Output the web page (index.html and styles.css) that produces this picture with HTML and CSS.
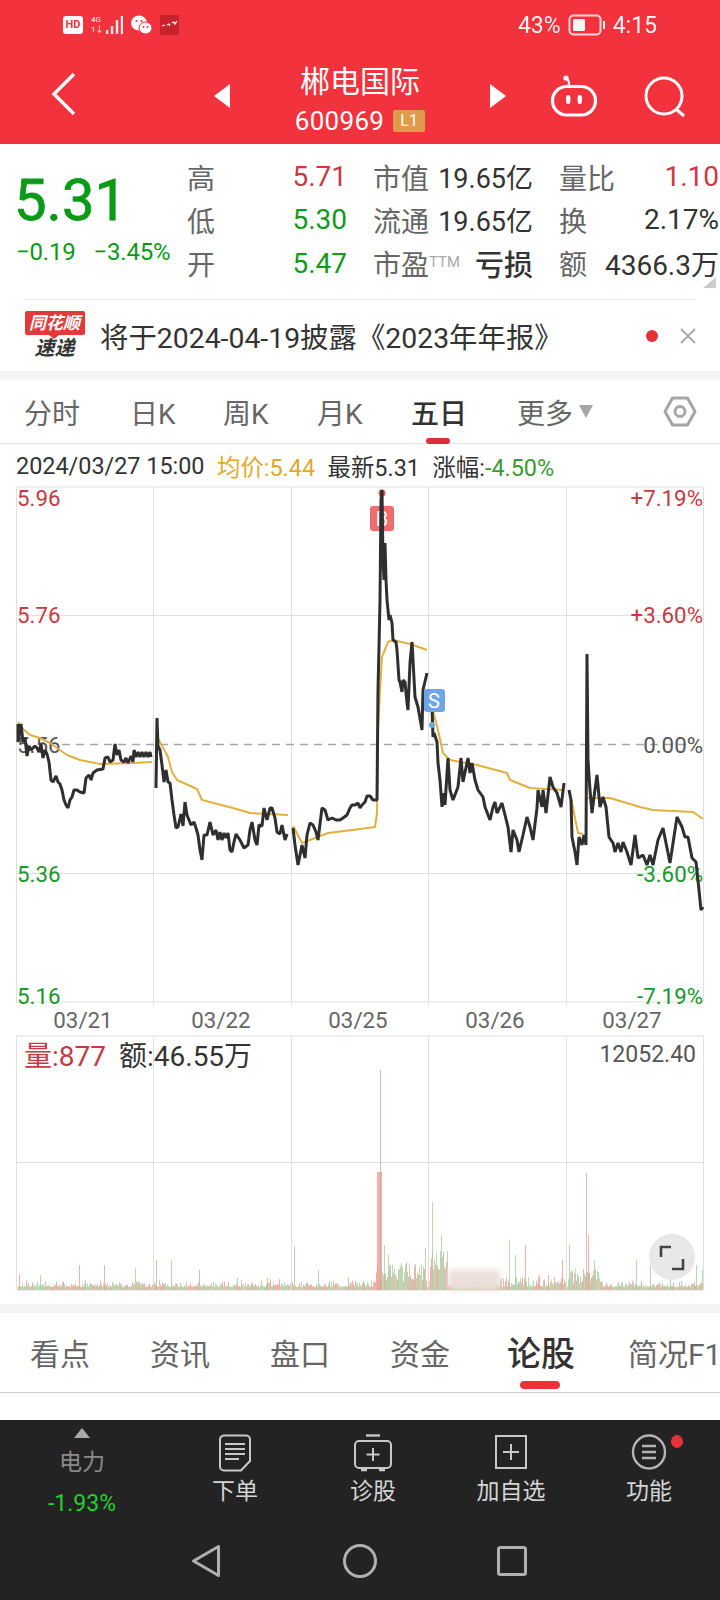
FILE: index.html
```html
<!DOCTYPE html>
<html lang="zh-CN">
<head>
    <meta charset="UTF-8">
    <meta name="viewport" content="width=device-width, initial-scale=1.0">
    <title>郴电国际</title>
    <link rel="stylesheet" href="styles.css">
</head>
<body>
    <div class="phone">
        <header class="top">
            <div class="status">
                <div class="status-left">
                    <span class="hd">HD</span>
                    <span class="net"><i>4G</i><i>1↓</i></span>
                    <svg class="signal" width="17" height="20" viewBox="0 0 17 20"><path d="M1 19v-4M6 19v-8M11 19V5M16 19V1" stroke="#fff" stroke-width="2.4" opacity=".9"/></svg>
                    <svg class="wechat" width="21" height="20" viewBox="0 0 21 20"><ellipse cx="8" cy="8" rx="8" ry="7.5" fill="#fff"/><ellipse cx="14.5" cy="13" rx="6.5" ry="6" fill="#fff" stroke="#f2323c"/><circle cx="5.5" cy="6" r="1.1" fill="#f2323c"/><circle cx="10.5" cy="6" r="1.1" fill="#f2323c"/><circle cx="12.5" cy="12" r=".9" fill="#f2323c"/><circle cx="16.5" cy="12" r=".9" fill="#f2323c"/></svg>
                    <svg class="app" width="19" height="20" viewBox="0 0 19 20"><rect width="19" height="20" fill="#c8222c"/><path d="M2 11l3-1M7 10l2-1 1 2M12 8l2-1 1 2 2-3" stroke="#fff" stroke-width="1.2" fill="none"/></svg>
                </div>
                <div class="status-right">
                    <span>43%</span>
                    <svg width="38" height="24" viewBox="0 0 38 24"><rect x="1.5" y="2.5" width="31" height="19" rx="4" fill="none" stroke="#fff" stroke-width="2" opacity=".85"/><rect x="5" y="6" width="12" height="12" rx="1.5" fill="#fff"/><rect x="35" y="8" width="2" height="8" fill="#fff"/></svg>
                    <span>4:15</span>
                </div>
            </div>
            <div class="titlebar">
                <svg class="back" width="26" height="44" viewBox="0 0 26 44"><path d="M23 2L3 22l20 20" fill="none" stroke="#fff" stroke-width="3.4"/></svg>
                <svg class="arrow-l" width="16" height="24" viewBox="0 0 16 24"><path d="M16 0v24L0 12z" fill="#fff"/></svg>
                <div class="stock">
                    <div class="stock-name">郴电国际</div>
                    <div class="stock-code">600969<span class="level">L1</span></div>
                </div>
                <svg class="arrow-r" width="16" height="24" viewBox="0 0 16 24"><path d="M0 0v24l16-12z" fill="#fff"/></svg>
                <svg class="robot" width="48" height="42" viewBox="0 0 48 42">
                    <path d="M18 11c2-2 1-6-2-8" fill="none" stroke="#fff" stroke-width="2.2"/>
                    <circle cx="16" cy="3" r="2.6" fill="#fff"/>
                    <rect x="2.5" y="11.5" width="43" height="28.5" rx="14.2" fill="none" stroke="#fff" stroke-width="3.2"/>
                    <rect x="16" y="20" width="4.4" height="9" rx="2.2" fill="#fff"/>
                    <rect x="27.6" y="20" width="4.4" height="9" rx="2.2" fill="#fff"/>
                </svg>
                <svg class="search" width="42" height="42" viewBox="0 0 42 42"><circle cx="20" cy="20" r="18" fill="none" stroke="#fff" stroke-width="3"/><path d="M32 33l8 7" stroke="#fff" stroke-width="3"/></svg>
            </div>
        </header>

        <section class="quote">
            <div class="quote-main">
                <div class="price">
                    <div class="price-now">5.31</div>
                    <div class="price-change"><span>−0.19</span><span>−3.45%</span></div>
                </div>
                <div class="stats">
                    <div class="stat"><span class="stat-label">高</span><span class="up">5.71</span></div>
                    <div class="stat"><span class="stat-label">市值</span><span class="stat-value cap">19.65亿</span></div>
                    <div class="stat"><span class="stat-label">量比</span><span class="up">1.10</span></div>
                    <div class="stat"><span class="stat-label">低</span><span class="down">5.30</span></div>
                    <div class="stat"><span class="stat-label">流通</span><span class="stat-value cap">19.65亿</span></div>
                    <div class="stat"><span class="stat-label">换</span><span class="stat-value">2.17%</span></div>
                    <div class="stat"><span class="stat-label">开</span><span class="down">5.47</span></div>
                    <div class="stat"><span class="stat-label">市盈<sup class="ttm">TTM</sup></span><span class="stat-value loss">亏损</span></div>
                    <div class="stat"><span class="stat-label">额</span><span class="stat-value">4366.3万</span></div>
                </div>
                <span class="corner"></span>
            </div>
            <div class="news">
                <div class="news-logo">
                    <span class="news-flag">同花顺</span>
                    <span class="news-sub">速递</span>
                </div>
                <div class="news-text">将于2024-04-19披露《2023年年报》</div>
                <span class="news-dot"></span>
                <svg class="news-close" width="16" height="16" viewBox="0 0 16 16"><path d="M1 1l14 14M15 1L1 15" stroke="#a8a8a8" stroke-width="1.8"/></svg>
            </div>
        </section>

        <div class="band"></div>

        <nav class="chart-tabs">
            <span class="chart-tab w-106">分时</span>
            <span class="chart-tab w-93">日K</span>
            <span class="chart-tab w-94">周K</span>
            <span class="chart-tab w-94">月K</span>
            <span class="chart-tab w-106 active">五日</span>
            <span class="chart-tab more">更多<i class="more-arrow"></i></span>
            <svg class="hex" width="34" height="31" viewBox="0 0 34 31"><path d="M9.5 2h15L32 15.5 24.5 29h-15L2 15.5z" fill="none" stroke="#a6a6a6" stroke-width="3" stroke-linejoin="round"/><circle cx="17" cy="15.5" r="5" fill="none" stroke="#a6a6a6" stroke-width="3"/></svg>
        </nav>

        <div class="info-line">
            <span>2024/03/27 15:00</span>
            <span class="avg">均价:5.44</span>
            <span>最新5.31</span>
            <span>涨幅:<em>-4.50%</em></span>
        </div>

        <svg class="price-chart" width="720" height="548" viewBox="0 486 720 548">
            <path class="grid" d="M16.5 487H703.5V1002H16.5ZM153.5 487V1006M291.5 487V1006M428.5 487V1006M566.5 487V1006M16 615.5H704M16 873.5H704"/>
            <path class="dash" d="M62 744.5H690"/>
            <text class="axis up-t" x="17" y="506">5.96</text>
            <text class="axis up-t" x="17" y="623">5.76</text>
            <text class="axis flat-t" x="17" y="753">5.56</text>
            <text class="axis down-t" x="17" y="882">5.36</text>
            <text class="axis down-t" x="17" y="1004">5.16</text>
            <text class="axis up-t end" x="703" y="506">+7.19%</text>
            <text class="axis up-t end" x="703" y="623">+3.60%</text>
            <text class="axis flat-t end" x="703" y="753">0.00%</text>
            <text class="axis down-t end" x="703" y="882">-3.60%</text>
            <text class="axis down-t end" x="703" y="1004">-7.19%</text>
            <text class="axis date" x="83" y="1028">03/21</text>
            <text class="axis date" x="221" y="1028">03/22</text>
            <text class="axis date" x="358" y="1028">03/25</text>
            <text class="axis date" x="495" y="1028">03/26</text>
            <text class="axis date" x="632" y="1028">03/27</text>

            <rect class="mark-b" x="370" y="506" width="24" height="25" rx="3"/>
            <text class="mark-text" x="382" y="526">B</text>
            <circle cx="382" cy="493" r="3.5" fill="#e0555c"/>

            <g class="avg-line">
                <polyline points="18,722 22,728 30,735 40,738 50,743 67,755 80,760 100,764 133,763 152,762"/>
                <polyline points="156,735 160,742 168,757 172,772 177,780 197,789 202,800 233,808 250,813 288,815"/>
                <polyline points="293,826 302,843 310,840 328,833 360,829 375,827 377,813 378,730 380,690 382,657 388,642 393,640 410,644 427,650"/>
                <polyline points="432,707 438,730 443,753 450,760 477,765 507,773 510,780 530,788 563,790"/>
                <polyline points="569,790 572,803 578,833 583,834"/>
                <polyline points="588,798 610,798 640,807 653,810 693,812 703,819"/>
            </g>
            <g class="price-line">
                <polyline points="18,724 18,742 21,724 23,742 25,738 27,756 29,746 31,750 35,746 37,748 39,752 41,744 43,758 45,750 47,754 49,762 51,780 53,782 56,776 58,782 60,784 62,790 64,800 66,805 68,808 70,800 72,797 74,790 77,790 80,792 84,793 86,778 89,775 91,780 93,773 97,770 103,769 105,758 108,757 110,762 113,760 115,744 117,755 119,750 121,760 124,762 126,758 128,763 131,756 133,762 134,750 136,757 138,752 140,757 142,752 144,757 146,752 148,757 150,752 151,757"/>
                <polyline points="156,788 157,718 158,746 160,750 162,765 164,782 166,770 168,782 170,783 172,800 174,815 176,828 178,827 181,814 183,826 185,802 187,815 189,820 191,825 194,822 196,828 198,835 200,850 202,860 204,835 207,835 210,822 213,835 216,830 218,840 220,832 222,840 224,833 226,838 228,833 230,850 232,852 234,842 236,834 240,840 244,848 248,845 250,830 252,822 255,840 257,845 259,825 262,826 264,808 267,820 270,808 272,808 275,818 277,832 280,834 282,825 285,840 287,834"/>
                <polyline points="293,828 295,845 298,865 300,855 302,845 305,858 307,835 310,823 313,825 316,832 318,840 322,808 325,810 328,820 332,818 336,820 340,820 343,818 347,815 350,808 352,805 355,805 358,803 360,808 362,805 365,802 367,796 370,796 373,800 376,800 377,800 378,690 379,647 380,600 381,500 382,490 383,560 384,580 385,543 386,580 387,600 388,610 389,620 390,615 392,623 393,640 396,642 397,650 399,680 400,682 402,692 403,680 405,682 407,703 408,710 410,663 412,642 413,660 415,697 418,707 422,730 423,690 427,673"/>
                <polyline points="432,707 433,737 434,733 437,742 438,763 440,780 442,807 443,793 445,805 448,758 450,790 453,800 458,787 461,758 463,782 468,758 470,773 472,763 475,780 478,790 483,797 485,807 490,820 493,807 495,802 497,813 502,803 505,815 508,827 511,852 513,830 517,840 519,852 523,835 527,817 530,827 533,840 537,808 538,790 542,807 543,790 546,813 550,777 553,787 557,793 561,807 564,783"/>
                <polyline points="569,790 571,800 572,837 575,852 577,865 579,837 582,845 584,835 586,845 587,654 588,760 590,790 592,813 594,797 597,775 600,807 603,797 606,807 609,837 613,843 615,852 618,843 621,852 623,842 627,852 631,865 635,835 638,858 643,855 647,865 650,855 653,865 658,840 663,828 666,843 670,863 677,817 682,827 685,837 688,837 692,858 696,862 699,890 701,910 703,907"/>
            </g>
            <rect class="mark-s" x="424" y="689" width="21" height="23" rx="3"/>
            <text class="mark-text" x="434" y="708">S</text>
            <circle cx="432" cy="725" r="3" fill="#6ea5e6"/>
        </svg>

        <svg class="volume-chart" id="volume-chart" width="720" height="262" viewBox="0 1034 720 262">
            <path class="grid" d="M16.5 1036H703.5V1290H16.5ZM153.5 1036V1290M291.5 1036V1290M428.5 1036V1290M566.5 1036V1290M16 1162.5H704"/>
            <g id="volume-bars"></g>
            <text class="vol-text up-t" x="24" y="1066">量:877</text>
            <text class="vol-text" x="119" y="1066">额:46.55万</text>
            <text class="axis flat-t end small-num" x="696" y="1062">12052.40</text>
            <circle cx="672" cy="1257" r="23" fill="#e8e8e8"/>
            <path d="M661 1257v-10h10M683 1259v10h-11" fill="none" stroke="#444" stroke-width="2.6"/>
        </svg>

        <div class="gap-8"></div>
        <div class="band"></div>

        <nav class="info-tabs">
            <span class="info-tab w-120">看点</span>
            <span class="info-tab w-120">资讯</span>
            <span class="info-tab w-120">盘口</span>
            <span class="info-tab w-117">资金</span>
            <span class="info-tab w-121 active">论股</span>
            <span class="info-tab">简况F1</span>
        </nav>
        <div class="white-gap"></div>

        <footer class="bottom">
            <div class="tools">
                <div class="tool sector">
                    <i class="sector-arrow"></i>
                    <span class="sector-name">电力</span>
                    <span class="sector-rate">-1.93%</span>
                </div>
                <div class="tool">
                    <svg width="34" height="38" viewBox="0 0 34 38"><path d="M6 1.5h22a4 4 0 0 1 4 4V27l-9 9.5H6a4 4 0 0 1-4-4v-27a4 4 0 0 1 4-4z" fill="none" stroke="#c8c8c8" stroke-width="2"/><path d="M7 10h20M7 15h20M7 20h20M7 25h14" stroke="#c8c8c8" stroke-width="2"/></svg>
                    <span class="tool-name">下单</span>
                </div>
                <div class="tool">
                    <svg width="40" height="38" viewBox="0 0 40 38"><path d="M13 1.5h14" stroke="#c8c8c8" stroke-width="2.4"/><rect x="2" y="7" width="36" height="27" rx="4" fill="none" stroke="#c8c8c8" stroke-width="2"/><path d="M20 14v13M13.5 20.5h13" stroke="#c8c8c8" stroke-width="2"/><path d="M8 36h6M26 36h6" stroke="#c8c8c8" stroke-width="2.4"/></svg>
                    <span class="tool-name">诊股</span>
                </div>
                <div class="tool">
                    <svg width="34" height="38" viewBox="0 0 34 38"><rect x="2" y="2" width="30" height="32" fill="none" stroke="#c8c8c8" stroke-width="2"/><path d="M17 10v16M9 18h16" stroke="#c8c8c8" stroke-width="2"/></svg>
                    <span class="tool-name">加自选</span>
                </div>
                <div class="tool func">
                    <svg width="36" height="38" viewBox="0 0 36 38"><ellipse cx="18" cy="18" rx="16" ry="16.5" fill="none" stroke="#b4b4b4" stroke-width="2.4"/><path d="M11 12h14M11 18h14M11 24h14" stroke="#b4b4b4" stroke-width="2.6"/></svg>
                    <span class="func-dot"></span>
                    <span class="tool-name">功能</span>
                </div>
            </div>
            <div class="navbar">
                <svg class="nav-back" width="30" height="34" viewBox="0 0 30 34"><path d="M27.5 2.5v29L2.5 17z" fill="none" stroke="#b0b0b0" stroke-width="3" stroke-linejoin="round"/></svg>
                <svg class="nav-home" width="34" height="34" viewBox="0 0 34 34"><circle cx="17" cy="17" r="15.5" fill="none" stroke="#b0b0b0" stroke-width="3"/></svg>
                <svg class="nav-recent" width="30" height="30" viewBox="0 0 30 30"><rect x="1.5" y="1.5" width="27" height="27" rx="2" fill="none" stroke="#b0b0b0" stroke-width="3"/></svg>
            </div>
        </footer>
    </div>
    <script src="volume.js"></script>
</body>
</html>
```

FILE: styles.css
```css
body {
    margin: 0;
    padding: 0;
    background-color: #fff;
    font-family: Roboto, "Noto Sans CJK SC", sans-serif;
}

.phone {
    width: 720px;
    height: 1600px;
    overflow: hidden;
    background-color: #fff;
}

svg {
    display: block;
}

/* top red area */
.top {
    height: 144px;
    background-color: #f2323c;
    color: #fff;
}

.status {
    height: 50px;
    display: flex;
    justify-content: space-between;
    align-items: center;
    padding: 0 63px;
}

.status-left {
    display: flex;
    align-items: center;
    gap: 8px;
}

.hd {
    width: 20px;
    height: 18px;
    border-radius: 3px;
    background-color: #fff;
    color: #f2323c;
    font-size: 11px;
    font-weight: 700;
    line-height: 18px;
    text-align: center;
}

.net {
    display: flex;
    flex-direction: column;
    margin-right: -6px;
    font-size: 8px;
    line-height: 10px;
}

.net i {
    font-style: normal;
}

.status-right {
    display: flex;
    align-items: center;
    gap: 7px;
    font-size: 23px;
    opacity: .95;
}

.titlebar {
    height: 94px;
    display: flex;
    align-items: flex-start;
    padding-left: 51px;
}

.back {
    margin-top: 22px;
}

.arrow-l {
    margin: 34px 0 0 137px;
}

.stock {
    width: 260px;
    text-align: center;
}

.stock-name {
    margin-top: 12px;
    font-size: 30px;
    line-height: 40px;
}

.stock-code {
    display: flex;
    justify-content: center;
    align-items: center;
    gap: 9px;
    margin-top: 4px;
    font-size: 26px;
    line-height: 30px;
    letter-spacing: 0.3px;
}

.level {
    width: 32px;
    height: 22px;
    border-radius: 2px;
    background-color: #e09a4b;
    font-size: 16px;
    line-height: 22px;
}

.arrow-r {
    margin-top: 34px;
}

.robot {
    margin: 25px 0 0 44px;
}

.search {
    margin: 26px 0 0 46px;
}

/* quote block */
.quote {
    height: 227px;
    padding: 0 0 0 16px;
    box-sizing: border-box;
}

.quote-main {
    position: relative;
    height: 155px;
    display: flex;
}

.price {
    width: 171px;
    flex-shrink: 0;
    color: #0a9a18;
}

.price-now {
    margin: 23px 0 0 -2px;
    font-size: 58px;
    line-height: 66px;
    -webkit-text-stroke: 0.8px #0a9a18;
}

.price-change {
    display: flex;
    gap: 18px;
    margin-top: 4px;
    font-size: 24px;
    line-height: 30px;
    white-space: nowrap;
    letter-spacing: -0.2px;
}

.stats {
    display: grid;
    grid-template-columns: 160px 160px 160px;
    grid-auto-rows: 43.3px;
    column-gap: 26px;
    padding-top: 11px;
    flex-shrink: 0;
}

.stat {
    display: flex;
    justify-content: space-between;
    align-items: center;
    font-size: 28px;
    white-space: nowrap;
}

.stat-label {
    color: #666;
    font-size: 28px;
}

.stat-value {
    color: #333;
}

.cap {
    font-size: 27px;
}

.loss {
    font-size: 29px;
    font-weight: 500;
}

.ttm {
    font-size: 15px;
    color: #aaa;
    vertical-align: 8px;
    line-height: 0;
}

.up {
    color: #cb3a42;
}

.down {
    color: #109a1f;
}

.corner {
    position: absolute;
    right: 4px;
    bottom: 11px;
    width: 0;
    height: 0;
    border-left: 13px solid transparent;
    border-bottom: 11px solid #ccc;
}

.news {
    display: flex;
    align-items: center;
    height: 72px;
    margin: 0 24px 0 8px;
    border-top: 1px solid #e6e6e6;
    box-sizing: border-box;
}

.news-logo {
    width: 61px;
    display: flex;
    flex-direction: column;
    align-items: center;
    font-style: italic;
    font-weight: 700;
    white-space: nowrap;
}

.news-flag {
    position: relative;
    width: 60px;
    height: 24px;
    border-radius: 2px;
    background-color: #e23a3a;
    color: #fff;
    font-size: 17px;
    line-height: 24px;
    text-align: center;
}

.news-flag::after {
    content: "";
    position: absolute;
    left: 24px;
    bottom: -4px;
    width: 0;
    height: 0;
    border-left: 5px solid transparent;
    border-right: 5px solid transparent;
    border-top: 4px solid #e23a3a;
}

.news-sub {
    margin-top: 1px;
    color: #333;
    font-size: 20px;
    line-height: 24px;
}

.news-text {
    flex: 1;
    margin-left: 15px;
    color: #333;
    font-size: 28.4px;
    white-space: nowrap;
}

.news-dot {
    width: 12px;
    height: 12px;
    border-radius: 50%;
    background-color: #e5323a;
    margin-right: 22px;
}

.band {
    height: 9px;
    background-color: #f4f4f4;
}

/* chart tabs */
.chart-tabs {
    height: 63px;
    display: flex;
    align-items: center;
    padding-left: 24px;
    border-bottom: 1px solid #e2e2e2;
    position: relative;
}

.chart-tab {
    color: #666;
    font-size: 28px;
    flex-shrink: 0;
}

.w-93 { width: 93px; }
.w-94 { width: 94px; }
.w-106 { width: 106px; }

.chart-tab.active {
    position: relative;
    color: #333;
    font-weight: 500;
}

.chart-tab.active::after {
    content: "";
    position: absolute;
    left: 15px;
    bottom: -12px;
    width: 24px;
    height: 6px;
    border-radius: 3px;
    background-color: #dc2f38;
}

.more {
    display: flex;
    align-items: center;
    width: 146px;
}

.more-arrow {
    width: 0;
    height: 0;
    margin: 0 0 0 6px;
    border-left: 7.5px solid transparent;
    border-right: 7.5px solid transparent;
    border-top: 13px solid #a6a6a6;
}

.info-line {
    height: 42px;
    display: flex;
    align-items: center;
    gap: 12.5px;
    padding: 2px 0 0 16px;
    box-sizing: border-box;
    color: #333;
    font-size: 23.4px;
    white-space: nowrap;
}

.avg {
    color: #e0a92e;
}

.info-line em {
    font-style: normal;
    color: #3d9a32;
}

/* charts */
.grid {
    fill: none;
    stroke: #e0e0e0;
    stroke-width: 1;
}

.dash {
    fill: none;
    stroke: #a6a6a6;
    stroke-width: 1.5;
    stroke-dasharray: 8 6;
}

.axis {
    font-size: 22.3px;
}

.small-num {
    font-size: 23px;
}

.end {
    text-anchor: end;
}

.vol-text {
    fill: #333;
    font-size: 28px;
}

.up-t {
    fill: #c53a44;
}

.down-t {
    fill: #16982a;
}

.flat-t {
    fill: #555;
}

.date {
    fill: #666;
    text-anchor: middle;
}

.avg-line polyline {
    fill: none;
    stroke: #e0b040;
    stroke-width: 2;
    stroke-linejoin: round;
}

.price-line polyline {
    fill: none;
    stroke: #2f2f2f;
    stroke-width: 3;
    stroke-linejoin: bevel;
}

.mark-b {
    fill: #ee6e6e;
}

.mark-s {
    fill: #6ea5e6;
}

.mark-text {
    fill: #fff;
    font-size: 20px;
    text-anchor: middle;
}

.vol-bar {
    opacity: .8;
}

.vol-patch {
    filter: blur(3px);
}

.gap-8 {
    height: 8px;
}

/* info tabs */
.info-tabs {
    height: 77px;
    display: flex;
    align-items: center;
    padding: 0 0 2px 30px;
    border-bottom: 1px solid #ccc;
    white-space: nowrap;
}

.info-tab {
    position: relative;
    flex-shrink: 0;
    color: #666;
    font-size: 30px;
}

.w-120 { width: 120px; }
.w-117 { width: 117px; }
.w-121 { width: 121px; }

.info-tab.active {
    color: #333;
    font-size: 34px;
    font-weight: 500;
}

.info-tab.active::after {
    content: "";
    position: absolute;
    left: 13px;
    bottom: -13px;
    width: 40px;
    height: 8px;
    border-radius: 4px;
    background-color: #ee3338;
}

.white-gap {
    height: 27px;
}

/* bottom dark bar */
.bottom {
    height: 180px;
    background-color: #232323;
}

.tools {
    height: 112px;
    display: grid;
    grid-template-columns: 153px repeat(4, 138px);
    padding-left: 13px;
}

.tool {
    position: relative;
    display: flex;
    flex-direction: column;
    align-items: center;
    padding-top: 14px;
    box-sizing: border-box;
}

.tool-name {
    margin-top: 3px;
    color: #d4d4d4;
    font-size: 23px;
    line-height: 34px;
    white-space: nowrap;
}

.sector {
    width: 138px;
    padding-top: 8px;
}

.sector-arrow {
    width: 0;
    height: 0;
    border-left: 8px solid transparent;
    border-right: 8px solid transparent;
    border-bottom: 10px solid #aaa;
}

.sector-name {
    margin-top: 8px;
    color: #8a8a8a;
    font-size: 23px;
    line-height: 34px;
}

.sector-rate {
    margin-top: 9px;
    color: #21d02c;
    font-size: 23px;
    line-height: 30px;
}

.func-dot {
    position: absolute;
    left: 91px;
    top: 15px;
    width: 12px;
    height: 13px;
    border-radius: 50%;
    background-color: #e5323a;
}

.navbar {
    display: flex;
    align-items: center;
    height: 34px;
    padding: 12px 0 0 191px;
}

.nav-home {
    margin-left: 122px;
}

.nav-recent {
    margin-left: 120px;
}
```

FILE: volume.js
```js
// volume bars: low noise with a hand-read list of spikes
const bars = document.getElementById('volume-bars');
const baseY = 1290;
const RED = '#ee9d92';
const GREEN = '#a9cf9f';
const MIXED = '#c9ae9c';

const spikes = [
    [19, 15, RED], [40, 15, GREEN], [79, 25, RED], [104, 25, MIXED], [135, 22, GREEN],
    [156, 30, MIXED], [171, 30, GREEN], [199, 20, MIXED], [237, 12, GREEN], [267, 12, RED],
    [294, 44, GREEN], [318, 20, GREEN], [348, 13, MIXED], [384, 45, GREEN], [388, 35, GREEN],
    [423, 18, GREEN], [425, 42, GREEN],
    [432, 88, GREEN], [441, 55, GREEN], [509, 50, GREEN], [515, 35, GREEN], [525, 45, RED],
    [539, 15, RED], [548, 15, RED], [562, 30, RED],
    [569, 45, GREEN], [586, 117, MIXED], [588, 55, RED], [594, 30, GREEN], [636, 30, GREEN],
    [650, 25, GREEN], [670, 20, GREEN], [696, 25, GREEN], [702, 20, GREEN]
];

// simple seeded noise so the picture is the same on every load
let seed = 969;
function noise() {
    seed = (seed * 1103 + 12345) % 65536;
    return seed / 65536;
}

function addBar(x, height, color, width) {
    const rect = document.createElementNS('http://www.w3.org/2000/svg', 'rect');
    rect.setAttribute('class', 'vol-bar');
    rect.setAttribute('x', x);
    rect.setAttribute('y', baseY - height);
    rect.setAttribute('width', width || 1);
    rect.setAttribute('height', height);
    rect.setAttribute('fill', color);
    bars.appendChild(rect);
}

function noiseHeight(x) {
    if (x >= 376 && x < 425) return 8 + noise() * 20;
    if (x >= 430 && x < 448) return 20 + noise() * 20;
    if (x >= 500 && x < 566) return 3 + noise() * 10;
    if (x >= 568 && x < 600) return 6 + noise() * 16;
    return 3 + noise() * noise() * 8;
}

for (let x = 18; x < 703; x++) {
    if (x === 153 || x === 291 || x === 428 || x === 566) continue;
    const pick = noise();
    addBar(x, noiseHeight(x), pick < 0.45 ? GREEN : pick < 0.7 ? RED : MIXED);
}

spikes.forEach(function (s) {
    addBar(s[0], s[1], s[2]);
});

// main spike of 03/25
addBar(377, 118, RED, 5);
addBar(380, 220, MIXED);

// soft patch on day four
const patch = document.createElementNS('http://www.w3.org/2000/svg', 'rect');
patch.setAttribute('class', 'vol-patch');
patch.setAttribute('x', 448);
patch.setAttribute('y', 1270);
patch.setAttribute('width', 52);
patch.setAttribute('height', 20);
patch.setAttribute('fill', '#ecdfda');
bars.appendChild(patch);
```
